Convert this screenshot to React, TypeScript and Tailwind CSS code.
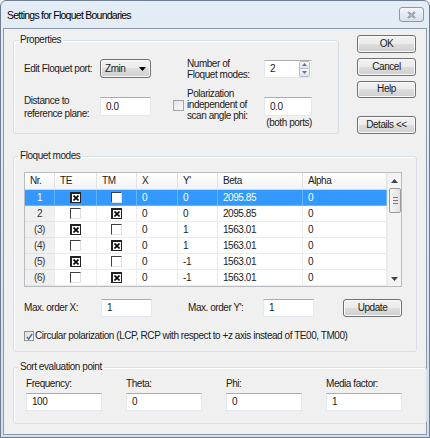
import React from 'react';

const btn =
  'flex items-center justify-center rounded-[3px] border border-[#707070] bg-[image:linear-gradient(#f2f2f2_0%,#ebebeb_50%,#dddddd_50%,#cfcfcf_100%)] shadow-[inset_0_0_0_1px_#fbfbfb]';
const field = 'flex items-center bg-white border border-[#e3e9ef] border-t-[#abadb3] pl-[5px]';

function Group({ title, className, children }: { title: string; className: string; children: React.ReactNode }) {
  return (
    <fieldset className={'border border-[#d5dfe5] rounded-[3px] shadow-[inset_1px_1px_0_#fff] ' + className}>
      <legend className="ml-[4px] px-[2px] leading-[12px]">{title}</legend>
      {children}
    </fieldset>
  );
}

function CellBox({ checked }: { checked: boolean }) {
  if (checked)
    return (
      <span className="w-[11px] h-[11px] bg-white border border-[#222] border-t-2 border-l-2 flex items-center justify-center">
        <svg width="6" height="6" viewBox="0 0 6 6">
          <path d="M0.5 0.5L5.5 5.5M5.5 0.5L0.5 5.5" stroke="#000" strokeWidth="1.6" />
        </svg>
      </span>
    );
  return <span className="w-[11px] h-[11px] bg-white border border-t-[#404040] border-l-[#404040] border-r-[#e0e0e0] border-b-[#e0e0e0]" />;
}

const rows = [
  { nr: '1', te: true, tm: false, x: '0', y: '0', beta: '2095.85', alpha: '0' },
  { nr: '2', te: false, tm: true, x: '0', y: '0', beta: '2095.85', alpha: '0' },
  { nr: '(3)', te: true, tm: false, x: '0', y: '1', beta: '1563.01', alpha: '0' },
  { nr: '(4)', te: false, tm: true, x: '0', y: '1', beta: '1563.01', alpha: '0' },
  { nr: '(5)', te: true, tm: false, x: '0', y: '-1', beta: '1563.01', alpha: '0' },
  { nr: '(6)', te: false, tm: true, x: '0', y: '-1', beta: '1563.01', alpha: '0' },
];

function ModesTable() {
  const head = 'h-[17px] flex items-center pl-[5px] border-r border-b border-r-[#e3e3e3] border-b-[#d5d5d5] bg-[image:linear-gradient(#ffffff,#f3f4f6)]';
  return (
    <div className="mt-[10px] ml-[10px] w-[378px] h-[115px] border border-[#b9bdc2] bg-white flex">
      <div className="grid grid-cols-[30px_42px_40px_41px_40px_85px_84px] content-start">
        {['Nr.', 'TE', 'TM', 'X', "Y'", 'Beta', 'Alpha'].map((h) => (
          <div key={h} className={head}>{h}</div>
        ))}
        {rows.map((r, i) => {
          const sel = i === 0;
          const cell =
            'h-[16px] flex items-center border-r border-b ' +
            (sel ? 'bg-[#3399ff] text-white border-[#66b3ff]' : 'border-[#ececec]');
          return (
            <React.Fragment key={r.nr}>
              <div className={cell + ' justify-center ' + (sel ? '' : 'bg-[#f0f0f0] text-[#333] border-b-[#e2e2e2]')}>{r.nr}</div>
              <div className={cell + ' justify-center'}><CellBox checked={r.te} /></div>
              <div className={cell + ' justify-center'}><CellBox checked={r.tm} /></div>
              <div className={cell + ' pl-[5px]'}>{r.x}</div>
              <div className={cell + ' pl-[5px]'}>{r.y}</div>
              <div className={cell + ' pl-[5px]'}>{r.beta}</div>
              <div className={cell + ' pl-[5px]'}>{r.alpha}</div>
            </React.Fragment>
          );
        })}
      </div>
      <div className="w-[14px] flex flex-col bg-[#f4f4f4] border-l border-[#ebebeb]">
        <div className="h-[15px] flex items-center justify-center">
          <svg width="7" height="4" viewBox="0 0 7 4"><path d="M3.5 0L7 4H0z" fill="#444" /></svg>
        </div>
        <div className="ml-[1px] w-[12px] h-[25px] rounded-[2px] border border-[#9b9b9b] bg-[image:linear-gradient(90deg,#f4f4f4,#e3e3e3)] flex flex-col items-center justify-center gap-[2px]">
          <span className="w-[5px] h-px bg-[#777]" />
          <span className="w-[5px] h-px bg-[#777]" />
          <span className="w-[5px] h-px bg-[#777]" />
        </div>
        <div className="flex-1" />
        <div className="h-[15px] flex items-center justify-center">
          <svg width="7" height="4" viewBox="0 0 7 4"><path d="M0 0H7L3.5 4z" fill="#444" /></svg>
        </div>
      </div>
    </div>
  );
}

export default function App() {
  return (
    <div className="w-[430px] h-[438px] bg-white font-['Liberation_Sans',Arial,sans-serif] text-[10px] leading-[12px] text-[#1b1b1b] tracking-[-0.45px] whitespace-nowrap">
      <div className="h-[438px] rounded-t-[6px] border border-[#6f7d91] bg-[image:linear-gradient(#e4ecf5,#d3dfed)] flex flex-col">
        <div className="h-[27px] flex items-center pl-[6px] pr-[5px]">
          <span className="text-[10.5px] text-black tracking-[-0.75px]">Settings for Floquet Boundaries</span>
          <div className="ml-auto w-[25px] h-[15px] rounded-[3px] border border-[#8d97a7] bg-[image:linear-gradient(#f3f6fa,#d8e0ea)] flex items-center justify-center">
            <svg width="9" height="8" viewBox="0 0 9 8">
              <path d="M1 1L8 7M8 1L1 7" stroke="#7c8594" strokeWidth="2" />
              <path d="M1 1L8 7M8 1L1 7" stroke="#e9edf2" strokeWidth="0.6" />
            </svg>
          </div>
        </div>
        <div className="flex-1 mx-[2px] mb-[2px] border border-[#8a98ad] bg-[#f0f0f0] pl-[9px] pt-[5px] flex flex-col">
          <div className="flex h-[100px]">
            <Group title="Properties" className="w-[326px] h-[100px]">
              <div className="mt-[13px] pl-[10px] h-[19px] flex items-center">
                <span className="w-[76px]">Edit Floquet port:</span>
                <div className={btn + ' w-[51px] h-[19px] !justify-between px-[4px] rounded-[2px]'}>
                  <span>Zmin</span>
                  <svg width="7" height="4" viewBox="0 0 7 4"><path d="M0 0H7L3.5 4z" fill="#000" /></svg>
                </div>
                <span className="ml-[36px] w-[77px] leading-[11px]">Number of<br />Floquet modes:</span>
                <div className={field + ' w-[48px] h-[18px] pr-[1px]'}>
                  <span className="flex-1">2</span>
                  <div className="w-[11px] h-[16px] flex flex-col">
                    <div className="flex-1 rounded-t-[2px] border border-[#b7bdc7] bg-[image:linear-gradient(#f7f8fa,#e2e6ec)] flex items-center justify-center">
                      <svg width="5" height="3" viewBox="0 0 5 3"><path d="M2.5 0L5 3H0z" fill="#6b7480" /></svg>
                    </div>
                    <div className="flex-1 rounded-b-[2px] border border-t-0 border-[#b7bdc7] bg-[image:linear-gradient(#f7f8fa,#e2e6ec)] flex items-center justify-center">
                      <svg width="5" height="3" viewBox="0 0 5 3"><path d="M0 0H5L2.5 3z" fill="#6b7480" /></svg>
                    </div>
                  </div>
                </div>
              </div>
              <div className="mt-[10px] pl-[10px] flex items-start">
                <span className="mt-[6px] w-[76px] leading-[13px]">Distance to<br />reference plane:</span>
                <div className={field + ' mt-[9px] w-[51px] h-[19px]'}>0.0</div>
                <span className="ml-[22px] mt-[12px] w-[11px] h-[11px] border border-[#a5a5a5] bg-[image:linear-gradient(135deg,#e2e2e2,#fbfbfb)]" />
                <span className="ml-[3px] w-[77px] leading-[11px]">Polarization<br />independent of<br />scan angle phi:</span>
                <div className="w-[48px] flex flex-col">
                  <div className={field + ' mt-[9px] h-[19px]'}>0.0</div>
                  <span className="mt-[1px] leading-[11px] text-right">(both ports)</span>
                </div>
              </div>
            </Group>
            <div className="ml-[18px] mt-[1px] flex flex-col gap-[5px]">
              <div className={btn + ' w-[59px] h-[18px]'}>OK</div>
              <div className={btn + ' w-[59px] h-[18px]'}>Cancel</div>
              <div className={btn + ' w-[59px] h-[18px]'}>Help</div>
              <div className={btn + ' w-[59px] h-[18px] mt-[13px]'}>Details &lt;&lt;</div>
            </div>
          </div>

          <Group title="Floquet modes" className="mt-[16px] w-[404px] h-[202px]">
            <ModesTable />
            <div className="mt-[12px] pl-[10px] h-[18px] flex items-center">
              <span className="w-[77px]">Max. order X:</span>
              <div className={field + ' w-[51px] h-[18px]'}>1</div>
              <span className="ml-[36px] w-[75px]">Max. order Y':</span>
              <div className={field + ' w-[51px] h-[18px]'}>1</div>
              <div className={btn + ' ml-[29px] w-[59px] h-[18px]'}>Update</div>
            </div>
            <div className="mt-[13px] pl-[10px] flex items-center gap-[1px]">
              <span className="w-[10px] h-[10px] border border-[#8f8f8f] bg-[image:linear-gradient(135deg,#dcdcdc,#fbfbfb)] flex items-center justify-center">
                <svg width="7" height="7" viewBox="0 0 8 8"><path d="M1 4.5L3 7L7 1" stroke="#3c5aa0" strokeWidth="1.5" fill="none" /></svg>
              </span>
              <span>Circular polarization (LCP, RCP with respect to +z axis instead of TE00, TM00)</span>
            </div>
          </Group>

          <Group title="Sort evaluation point" className="mt-[9px] w-[404px] h-[63px]">
            <div className="mt-[5px] pl-[12px] flex">
              {[
                ['Frequency:', '100'],
                ['Theta:', '0'],
                ['Phi:', '0'],
                ['Media factor:', '1'],
              ].map(([l, v]) => (
                <div key={l} className="w-[100px] flex flex-col">
                  <span className="leading-[11px]">{l}</span>
                  <div className={field + ' mt-[4px] w-[76px] h-[18px]'}>{v}</div>
                </div>
              ))}
            </div>
          </Group>
        </div>
      </div>
    </div>
  );
}
